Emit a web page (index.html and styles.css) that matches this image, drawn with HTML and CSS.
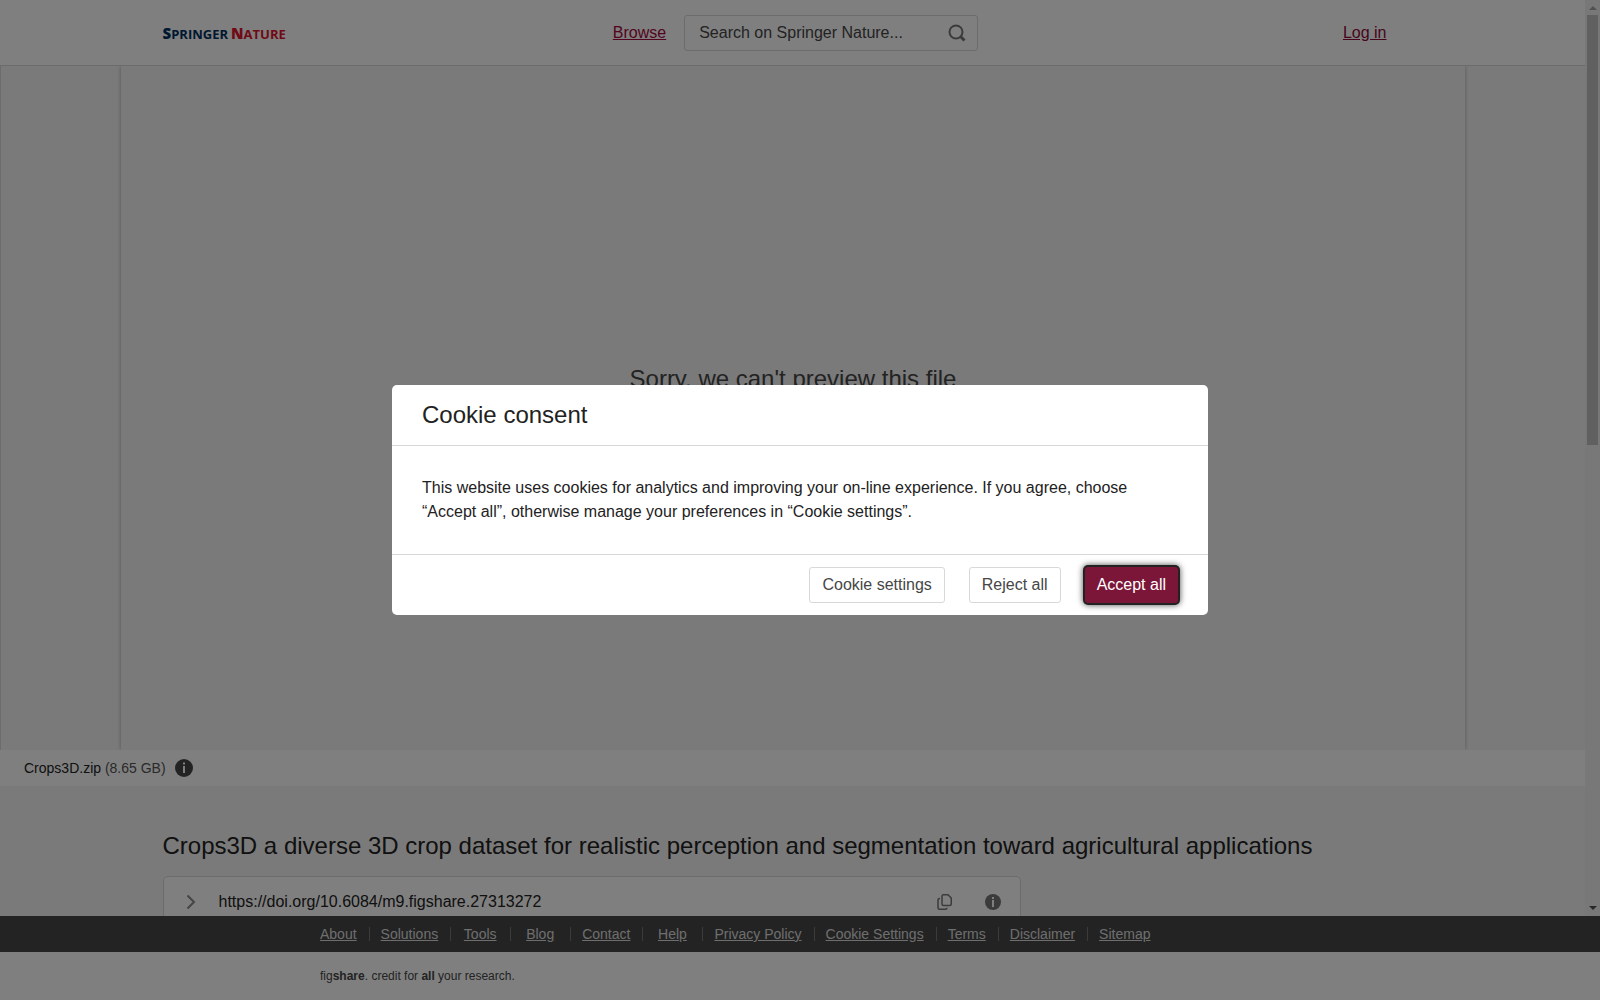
FILE: index.html
```html
<!DOCTYPE html>
<html lang="en">

<head>
  <meta charset="UTF-8">
  <meta name="viewport" content="width=device-width, initial-scale=1.0">
  <title>Crops3D a diverse 3D crop dataset</title>
  <link rel="stylesheet" href="styles.css">
</head>

<body>
  <div class="viewport">
    <div class="page">
      <header>
        <div class="container header-inner">
          <a href="#" class="logo"><span class="springer"><b>S</b>PRINGER</span><span class="nature"><b>N</b>ATURE</span></a>
          <div class="header-middle">
            <a href="#" class="link">Browse</a>
            <form class="search">
              <input type="text" placeholder="Search on Springer Nature..." aria-label="Search on Springer Nature">
              <button type="submit" aria-label="Search">
                <svg width="18" height="18" viewBox="0 0 18 18" fill="none" stroke="#777" stroke-width="2">
                  <circle cx="8" cy="8" r="6.5"/>
                  <path d="M12 12l4.5 4.5" stroke-width="3"/>
                </svg>
              </button>
            </form>
          </div>
          <a href="#" class="link login">Log in</a>
        </div>
      </header>

      <main>
        <section class="preview">
          <div class="slide side"></div>
          <div class="slide current">
            <p>Sorry, we can't preview this file</p>
          </div>
          <div class="slide side"></div>
        </section>

        <div class="file-bar">
          <p>Crops3D.zip <span>(8.65 GB)</span></p>
          <button type="button" class="icon-button" aria-label="File info">
            <svg width="18" height="18" viewBox="0 0 18 18">
              <circle cx="9" cy="9" r="9" fill="#464646"/>
              <path d="M8 3.5h2v2H8zM8 7h2v7H8z" fill="#fff"/>
            </svg>
          </button>
        </div>

        <section class="container details">
          <h1>Crops3D a diverse 3D crop dataset for realistic perception and segmentation toward agricultural applications</h1>
          <div class="doi">
            <button type="button" class="icon-button" aria-label="Expand">
              <svg width="10" height="16" viewBox="0 0 10 16" fill="none" stroke="#888" stroke-width="2">
                <path d="M1.5 1.5L8 8l-6.5 6.5"/>
              </svg>
            </button>
            <span class="doi-text">https://doi.org/10.6084/m9.figshare.27313272</span>
            <button type="button" class="icon-button" aria-label="Copy">
              <svg width="16" height="16" viewBox="0 0 16 16" fill="none" stroke="#777" stroke-width="1.5">
                <path d="M6.5.75H11L14.25 4v6a1.5 1.5 0 0 1-1.5 1.5H6.5A1.5 1.5 0 0 1 5 10V2.25A1.5 1.5 0 0 1 6.5.75z"/>
                <path d="M3 4.5h-.5A1.5 1.5 0 0 0 1 6v7.75a1.5 1.5 0 0 0 1.5 1.5h6a1.5 1.5 0 0 0 1.5-1.5"/>
              </svg>
            </button>
            <button type="button" class="icon-button" aria-label="DOI info">
              <svg width="16" height="16" viewBox="0 0 16 16">
                <circle cx="8" cy="8" r="8" fill="#777"/>
                <path d="M7 3h2v2H7zM7 6h2v7H7z" fill="#fff"/>
              </svg>
            </button>
          </div>
        </section>
      </main>
    </div>

    <div class="scrollbar" aria-hidden="true">
      <i class="arrow up"></i>
      <div class="track"><div class="thumb"></div></div>
      <i class="arrow down"></i>
    </div>
  </div>

  <footer>
    <nav>
      <ul>
        <li><a href="#">About</a></li>
        <li><a href="#">Solutions</a></li>
        <li><a href="#">Tools</a></li>
        <li><a href="#">Blog</a></li>
        <li><a href="#">Contact</a></li>
        <li><a href="#">Help</a></li>
        <li><a href="#">Privacy Policy</a></li>
        <li><a href="#">Cookie Settings</a></li>
        <li><a href="#">Terms</a></li>
        <li><a href="#">Disclaimer</a></li>
        <li><a href="#">Sitemap</a></li>
      </ul>
    </nav>
    <p class="credit">fig<b>share</b>. credit for <b>all</b> your research.</p>
  </footer>

  <div class="overlay">
    <div class="modal" role="dialog" aria-modal="true" aria-labelledby="cookie-title">
      <h2 id="cookie-title">Cookie consent</h2>
      <p>This website uses cookies for analytics and improving your on-line experience. If you agree, choose “Accept all”, otherwise manage your preferences in “Cookie settings”.</p>
      <div class="modal-buttons">
        <button type="button">Cookie settings</button>
        <button type="button">Reject all</button>
        <button type="button" class="primary">Accept all</button>
      </div>
    </div>
  </div>
</body>

</html>
```

FILE: styles.css
```css
* {
  box-sizing: border-box;
}

body {
  margin: 0;
  height: 100vh;
  display: flex;
  flex-direction: column;
  overflow: hidden;
  font-family: "Liberation Sans", Arial, sans-serif;
  font-size: 16px;
  line-height: 24px;
  color: #222;
  background: #fff;
}

h1,
h2,
p,
ul {
  margin: 0;
  padding: 0;
  font-weight: normal;
}

button,
input {
  font: inherit;
}

.viewport {
  flex: 1;
  min-height: 0;
  display: flex;
}

.page {
  flex: 1;
  overflow: hidden;
  background: #f5f5f5;
}

.container {
  width: 80%;
  max-width: 1260px;
  margin: 0 auto;
}

/* header */
header {
  background: #fff;
  border-bottom: 1px solid #d8d8d8;
}

.header-inner {
  display: grid;
  grid-template-columns: 1fr auto 1fr;
  align-items: center;
  height: 65px;
}

.logo {
  display: flex;
  gap: 3px;
  padding-top: 2px;
  font-family: "Open Sans", sans-serif;
  font-size: 13px;
  font-weight: 700;
  text-decoration: none;
}

.logo b {
  font-size: 15px;
}

.springer {
  color: #01305f;
}

.nature {
  color: #e0142f;
}

.header-middle {
  display: flex;
  align-items: center;
  gap: 18px;
  padding-left: 6px;
}

.link {
  color: #a6083c;
}

.login {
  justify-self: end;
  margin-right: 36px;
  color: #8c0b38;
}

.search {
  display: flex;
  align-items: center;
  width: 294px;
  height: 36px;
  padding: 0 11px 0 14px;
  border: 1px solid #d8d8d8;
  border-radius: 3px;
}

.search input {
  flex: 1;
  min-width: 0;
  padding: 0;
  border: 0;
  outline: 0;
  background: none;
}

.search input::placeholder {
  color: #464646;
}

.search button,
.icon-button {
  display: flex;
  padding: 0;
  border: 0;
  background: none;
}

/* file preview */
.preview {
  display: flex;
  height: 684px;
  overflow: hidden;
  border-left: 1px solid #d8d8d8;
}

.side {
  width: 120px;
}

.current {
  flex: 1;
  padding-top: 297px;
  box-shadow: 0 0 4px rgba(0, 0, 0, 0.3);
  color: #464646;
  font-size: 24px;
  line-height: 32px;
  text-align: center;
}

.file-bar {
  display: flex;
  align-items: center;
  gap: 9px;
  height: 36px;
  padding: 0 24px;
  background: #fff;
  font-size: 14px;
}

.file-bar span {
  color: #555;
}

.details {
  padding-top: 44px;
}

.details h1 {
  font-size: 24px;
  line-height: 32px;
}

.doi {
  display: flex;
  align-items: center;
  gap: 32px;
  max-width: 858px;
  height: 52px;
  margin-top: 14px;
  padding: 0 19px 0 22px;
  background: #fff;
  border: 1px solid #d8d8d8;
  border-radius: 5px;
}

.doi-text {
  flex: 1;
  margin-left: -9px;
}

/* scrollbar */
.scrollbar {
  display: flex;
  flex-direction: column;
  align-items: center;
  width: 15px;
  padding: 6px 2px;
  background: #f1f1f1;
}

.track {
  flex: 1;
  align-self: stretch;
  margin: 5px 0;
}

.thumb {
  height: 48.5%;
  background: #c1c1c1;
}

.arrow {
  border: 4px solid transparent;
}

.up {
  border-top: 0;
  border-bottom-color: #a3a3a3;
}

.down {
  border-bottom: 0;
  border-top-color: #505050;
}

/* footer */
footer nav {
  height: 36px;
  background: #464646;
}

footer ul,
.credit {
  width: 984px;
  margin: 0 auto;
}

footer ul {
  display: flex;
  list-style: none;
  font-size: 14px;
  line-height: 14px;
  padding-top: 11px;
}

footer li {
  min-width: 60px;
  padding: 0 12px;
  box-shadow: 1px 0 #777;
  text-align: center;
  white-space: nowrap;
}

footer li:last-child {
  box-shadow: none;
}

footer a {
  color: #ddd;
}

.credit {
  height: 48px;
  padding: 0 12px;
  color: #464646;
  font-size: 12px;
  line-height: 48px;
}

/* cookie dialog */
.overlay {
  position: fixed;
  inset: 0;
  display: flex;
  align-items: center;
  justify-content: center;
  background: rgba(0, 0, 0, 0.5);
}

.modal {
  width: 816px;
  max-width: 100%;
  background: #fff;
  border-radius: 5px;
}

.modal h2 {
  padding: 14px 30px;
  border-bottom: 1px solid #d8d8d8;
  font-size: 24px;
  line-height: 32px;
}

.modal p {
  padding: 30px;
}

.modal-buttons {
  display: flex;
  justify-content: flex-end;
  gap: 24px;
  padding: 12px 30px;
  border-top: 1px solid #d8d8d8;
}

.modal-buttons button {
  height: 36px;
  padding: 0 12px;
  border: 1px solid #d8d8d8;
  border-radius: 3px;
  background: #fff;
  color: #464646;
}

.modal-buttons .primary {
  border: 0;
  background: #7b1639;
  color: #fff;
  box-shadow: 0 0 0 2px #222, 0 0 6px 2px rgba(0, 0, 0, 0.7);
}
```
